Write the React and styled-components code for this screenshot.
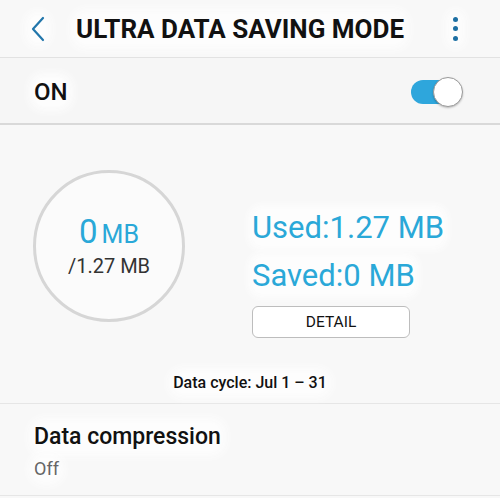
import React from "react";
import styled, { createGlobalStyle } from "styled-components";

const Global = createGlobalStyle`
  html, body { margin: 0; padding: 0; background: #f8f8f8; }
  body { font-family: Roboto, "Noto Sans", "Liberation Sans", sans-serif; }
  * { box-sizing: border-box; }
`;

const BLUE = "#2aa8d8";

const Screen = styled.div`
  width: 500px;
  height: 498px;
  overflow: hidden;
  background: #f8f8f8;
  display: flex;
  flex-direction: column;
`;

const Halo = styled.span`
  background: #fdfdfd;
  border-radius: 10px;
  box-shadow: 0 0 8px 5px #fdfdfd;
`;

const Header = styled.header`
  height: 58px;
  display: flex;
  align-items: center;
  padding-left: 30px;
  border-bottom: 1.5px solid #e2e2e2;
  background: #f8f8f8;
`;

const IconBox = styled.span`
  display: flex;
  align-items: center;
  justify-content: center;
  background: #fdfdfd;
  border-radius: 10px;
  box-shadow: 0 0 8px 5px #fdfdfd;
`;

const Title = styled(Halo)`
  margin-left: 30px;
  font-size: 26px;
  font-weight: 700;
  color: #111;
  line-height: 30px;
`;

const Kebab = styled(IconBox)`
  margin-left: auto;
  margin-right: 40px;
  flex-direction: column;
  gap: 4.5px;
  padding: 2px;
`;

const Dot = styled.span`
  width: 5px;
  height: 5px;
  border-radius: 50%;
  background: #1d6fa3;
`;

const SwitchRow = styled.div`
  height: 67px;
  display: flex;
  align-items: center;
  padding: 3px 37px 0 34px;
  background: #f6f6f6;
  border-bottom: 2px solid #d9d9d9;
`;

const OnLabel = styled(Halo)`
  font-size: 24px;
  font-weight: 500;
  color: #111;
  line-height: 28px;
`;

const Toggle = styled.div`
  margin-left: auto;
  position: relative;
  width: 52px;
  height: 30px;
  display: flex;
  align-items: center;
`;

const Track = styled.div`
  width: 46px;
  height: 24px;
  border-radius: 12px;
  background: #2ea6dc;
`;

const Knob = styled.div`
  position: absolute;
  right: 0;
  top: 0;
  width: 30px;
  height: 30px;
  border-radius: 50%;
  background: #fff;
  border: 1px solid #9a9a9a;
  box-shadow: 0 1px 2px rgba(0, 0, 0, 0.25);
`;

const Usage = styled.section`
  display: flex;
  flex-direction: column;
  align-items: center;
  padding-top: 45px;
  padding-bottom: 10px;
  border-bottom: 1px solid #e6e6e6;
`;

const UsageRow = styled.div`
  width: 100%;
  display: flex;
  align-items: flex-start;
  padding-left: 33px;
`;

const Ring = styled.div`
  width: 152px;
  height: 152px;
  border-radius: 50%;
  border: 3px solid #d6d6d6;
  display: flex;
  flex-direction: column;
  align-items: center;
  justify-content: center;
  padding-bottom: 2px;
  background: #fbfbfb;
`;

const BigValue = styled.div`
  color: ${BLUE};
  line-height: 38px;
  display: flex;
  align-items: baseline;
`;

const BigNum = styled.span`
  font-size: 33px;
`;

const BigUnit = styled.span`
  font-size: 25px;
  margin-left: 4px;
`;

const Total = styled.div`
  font-size: 20px;
  color: #333;
  line-height: 24px;
`;

const Stats = styled.div`
  margin-left: 67px;
  margin-top: 34px;
  display: flex;
  flex-direction: column;
  align-items: flex-start;
`;

const StatLine = styled.div`
  font-size: 31px;
  line-height: 48px;
  color: ${BLUE};
  white-space: nowrap;
`;

const StatText = styled(Halo)`
  box-shadow: 0 0 6px 4px #fdfdfd;
`;

const DetailButton = styled.button`
  margin-top: 6px;
  width: 158px;
  height: 32px;
  border: 1px solid #bdbdbd;
  border-radius: 6px;
  background: #fff;
  font-family: inherit;
  font-size: 15.5px;
  color: #111;
  padding: 0;
`;

const Cycle = styled(Halo)`
  margin-top: 35px;
  font-size: 16px;
  font-weight: 500;
  color: #111;
  line-height: 20px;
`;

const Item = styled.div`
  padding: 19px 34px 15px;
  display: flex;
  flex-direction: column;
  align-items: flex-start;
  gap: 7px;
  border-bottom: 1px solid #e6e6e6;
`;

const ItemTitle = styled(Halo)`
  font-size: 23px;
  font-weight: 500;
  color: #111;
  line-height: 28px;
`;

const ItemSub = styled(Halo)`
  font-size: 18px;
  color: #666;
  line-height: 22px;
`;

export default function App() {
  return (
    <>
      <Global />
      <Screen>
        <Header>
          <IconBox>
            <svg width="16" height="26" viewBox="0 0 16 26">
              <path d="M13 2 L3 13 L13 24" fill="none" stroke="#2276ab" strokeWidth="2.2" strokeLinecap="round" strokeLinejoin="round" />
            </svg>
          </IconBox>
          <Title>ULTRA DATA SAVING MODE</Title>
          <Kebab>
            <Dot />
            <Dot />
            <Dot />
          </Kebab>
        </Header>
        <SwitchRow>
          <OnLabel>ON</OnLabel>
          <Toggle>
            <Track />
            <Knob />
          </Toggle>
        </SwitchRow>
        <Usage>
          <UsageRow>
            <Ring>
              <BigValue>
                <BigNum>0</BigNum>
                <BigUnit>MB</BigUnit>
              </BigValue>
              <Total>/1.27 MB</Total>
            </Ring>
            <Stats>
              <StatLine><StatText>Used:1.27 MB</StatText></StatLine>
              <StatLine><StatText>Saved:0 MB</StatText></StatLine>
              <DetailButton>DETAIL</DetailButton>
            </Stats>
          </UsageRow>
          <Cycle>Data cycle: Jul 1 – 31</Cycle>
        </Usage>
        <Item>
          <ItemTitle>Data compression</ItemTitle>
          <ItemSub>Off</ItemSub>
        </Item>
      </Screen>
    </>
  );
}
